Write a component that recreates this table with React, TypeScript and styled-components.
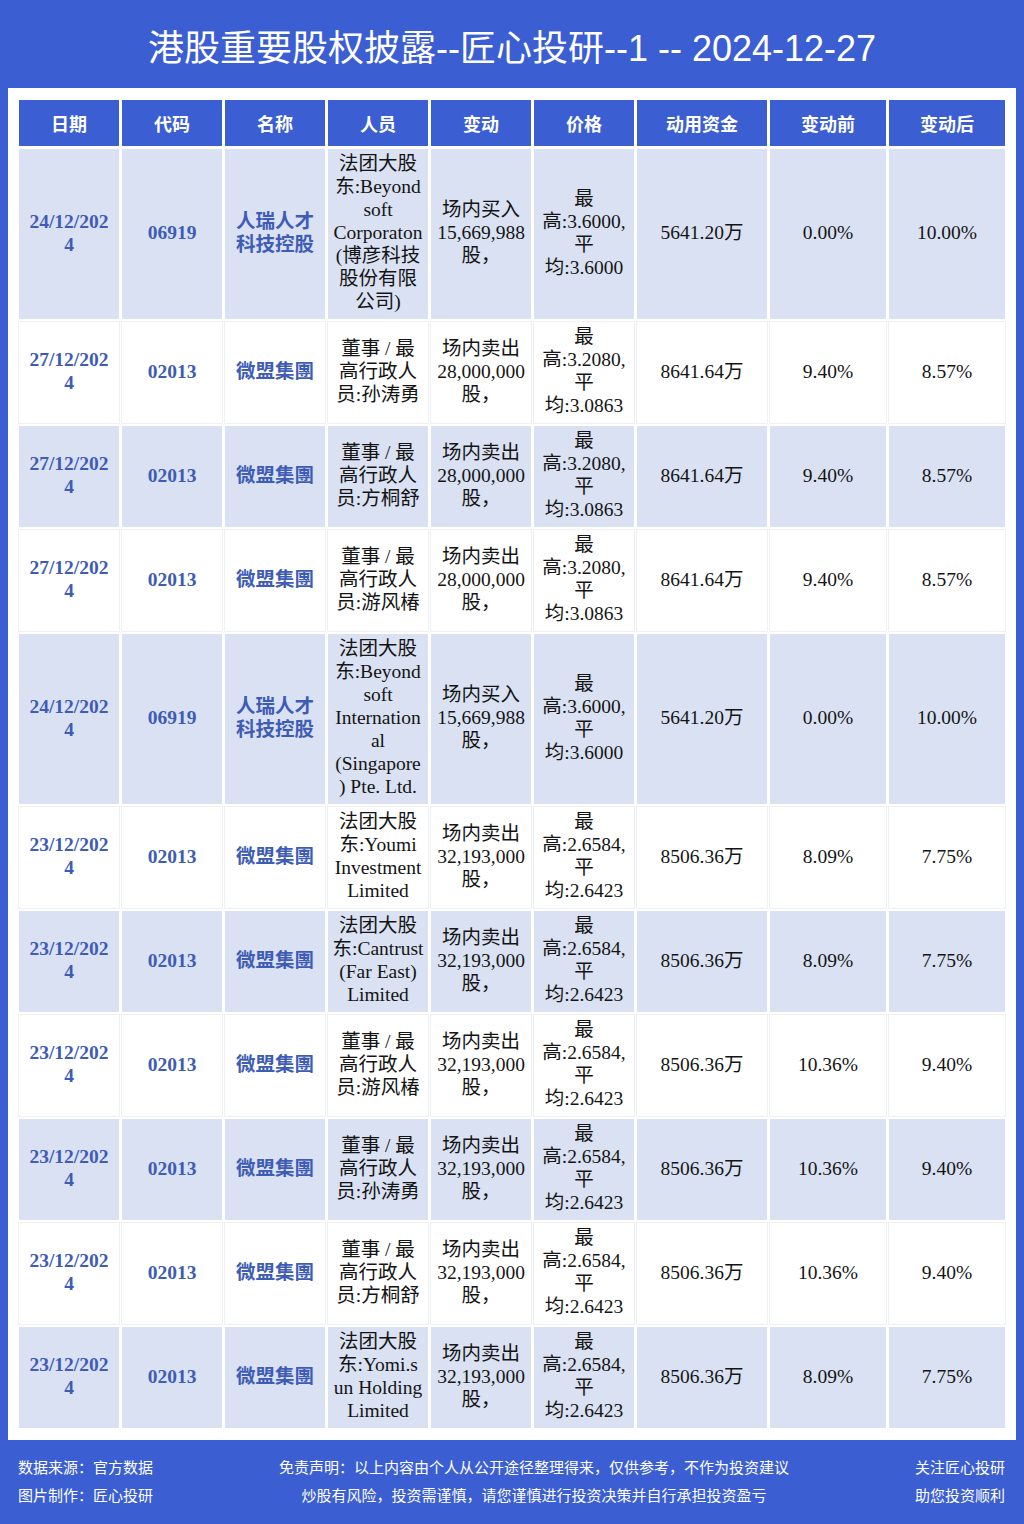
import React from "react";
import styled, { createGlobalStyle } from "styled-components";

const Global = createGlobalStyle`
  html, body { margin: 0; padding: 0; background: #3b5ed3; }
  #root { width: 1024px; min-height: 1524px; background: #3b5ed3; }
`;

const Page = styled.div`
  width: 1024px;
  display: flex;
  flex-direction: column;
  background: #3b5ed3;
`;

const Title = styled.h1`
  margin: 0;
  height: 88px;
  display: flex;
  align-items: center;
  justify-content: center;
  padding-top: 2px;
  box-sizing: border-box;
  color: #ffffff;
  font-family: "Liberation Sans", "Noto Sans CJK SC", sans-serif;
  font-weight: 400;
  font-size: 36px;
  letter-spacing: 0;
`;

const Panel = styled.div`
  margin: 0 8px;
  padding: 9px 8px;
  background: #ffffff;
`;

const Table = styled.table`
  width: 992px;
  table-layout: fixed;
  border-collapse: separate;
  border-spacing: 3px;
  background: #ffffff;
`;

const HeadCell = styled.th`
  height: 46px;
  padding: 0;
  background: #3b5ed3;
  color: #ffffff;
  font-family: "Noto Sans CJK SC", sans-serif;
  font-weight: 700;
  font-size: 18px;
  text-align: center;
  vertical-align: middle;
`;

const Row = styled.tr<{ $shaded: boolean }>`
  background: ${(p) => (p.$shaded ? "#d9e1f2" : "#ffffff")};
`;

const Cell = styled.td<{ $accent?: boolean; $white: boolean }>`
  padding: 3px 0 6px;
  text-align: center;
  vertical-align: middle;
  white-space: nowrap;
  line-height: 23px;
  font-family: "Liberation Serif", "Noto Sans CJK SC", serif;
  font-size: 19.5px;
  font-weight: ${(p) => (p.$accent ? 700 : 400)};
  color: ${(p) => (p.$accent ? "#3e5cb6" : "#141414")};
  box-shadow: ${(p) => (p.$white ? "0 0 0 1px #eef0f4" : "none")};
`;

const Footer = styled.div`
  display: flex;
  justify-content: space-between;
  align-items: flex-start;
  padding: 13px 19px 15px 18px;
  color: #ffffff;
  font-family: "Noto Sans CJK SC", sans-serif;
  font-size: 15px;
  line-height: 28px;
`;

const FootCol = styled.div<{ $align: "left" | "center" | "right" }>`
  display: flex;
  flex-direction: column;
  text-align: ${(p) => p.$align};
  white-space: nowrap;
`;

const widths = [100, 100, 100, 100, 100, 100, 130, 116, 116];
const headers = ["日期", "代码", "名称", "人员", "变动", "价格", "动用资金", "变动前", "变动后"];

type RowData = {
  date: string[];
  code: string;
  name: string[];
  person: string[];
  change: string[];
  price: string[];
  fund: string;
  before: string;
  after: string;
};

const buyPrice = ["最", "高:3.6000,", "平", "均:3.6000"];
const sell28 = ["场内卖出", "28,000,000", "股，"];
const price28 = ["最", "高:3.2080,", "平", "均:3.0863"];
const sell32 = ["场内卖出", "32,193,000", "股，"];
const price32 = ["最", "高:2.6584,", "平", "均:2.6423"];
const buy15 = ["场内买入", "15,669,988", "股，"];
const renrui = ["人瑞人才", "科技控股"];
const weimeng = ["微盟集團"];
const exec = (n: string) => ["董事 / 最", "高行政人", `员:${n}`];

const rows: RowData[] = [
  { date: ["24/12/202", "4"], code: "06919", name: renrui, person: ["法团大股", "东:Beyond", "soft", "Corporaton", "(博彦科技", "股份有限", "公司)"], change: buy15, price: buyPrice, fund: "5641.20万", before: "0.00%", after: "10.00%" },
  { date: ["27/12/202", "4"], code: "02013", name: weimeng, person: exec("孙涛勇"), change: sell28, price: price28, fund: "8641.64万", before: "9.40%", after: "8.57%" },
  { date: ["27/12/202", "4"], code: "02013", name: weimeng, person: exec("方桐舒"), change: sell28, price: price28, fund: "8641.64万", before: "9.40%", after: "8.57%" },
  { date: ["27/12/202", "4"], code: "02013", name: weimeng, person: exec("游风椿"), change: sell28, price: price28, fund: "8641.64万", before: "9.40%", after: "8.57%" },
  { date: ["24/12/202", "4"], code: "06919", name: renrui, person: ["法团大股", "东:Beyond", "soft", "Internation", "al", "(Singapore", ") Pte. Ltd."], change: buy15, price: buyPrice, fund: "5641.20万", before: "0.00%", after: "10.00%" },
  { date: ["23/12/202", "4"], code: "02013", name: weimeng, person: ["法团大股", "东:Youmi", "Investment", "Limited"], change: sell32, price: price32, fund: "8506.36万", before: "8.09%", after: "7.75%" },
  { date: ["23/12/202", "4"], code: "02013", name: weimeng, person: ["法团大股", "东:Cantrust", "(Far East)", "Limited"], change: sell32, price: price32, fund: "8506.36万", before: "8.09%", after: "7.75%" },
  { date: ["23/12/202", "4"], code: "02013", name: weimeng, person: exec("游风椿"), change: sell32, price: price32, fund: "8506.36万", before: "10.36%", after: "9.40%" },
  { date: ["23/12/202", "4"], code: "02013", name: weimeng, person: exec("孙涛勇"), change: sell32, price: price32, fund: "8506.36万", before: "10.36%", after: "9.40%" },
  { date: ["23/12/202", "4"], code: "02013", name: weimeng, person: exec("方桐舒"), change: sell32, price: price32, fund: "8506.36万", before: "10.36%", after: "9.40%" },
  { date: ["23/12/202", "4"], code: "02013", name: weimeng, person: ["法团大股", "东:Yomi.s", "un Holding", "Limited"], change: sell32, price: price32, fund: "8506.36万", before: "8.09%", after: "7.75%" },
];

const Lines = ({ lines }: { lines: string[] }) => (
  <>
    {lines.map((l, i) => (
      <React.Fragment key={i}>
        {i > 0 && <br />}
        {l}
      </React.Fragment>
    ))}
  </>
);

export default function App() {
  return (
    <Page>
      <Global />
      <Title>港股重要股权披露--匠心投研--1 -- 2024-12-27</Title>
      <Panel>
        <Table>
          <colgroup>
            {widths.map((w, i) => (
              <col key={i} style={{ width: w }} />
            ))}
          </colgroup>
          <thead>
            <tr>
              {headers.map((h) => (
                <HeadCell key={h}>{h}</HeadCell>
              ))}
            </tr>
          </thead>
          <tbody>
            {rows.map((r, i) => {
              const shaded = i % 2 === 0;
              const w = !shaded;
              return (
                <Row key={i} $shaded={shaded}>
                  <Cell $accent $white={w}><Lines lines={r.date} /></Cell>
                  <Cell $accent $white={w}>{r.code}</Cell>
                  <Cell $accent $white={w}><Lines lines={r.name} /></Cell>
                  <Cell $white={w}><Lines lines={r.person} /></Cell>
                  <Cell $white={w}><Lines lines={r.change} /></Cell>
                  <Cell $white={w}><Lines lines={r.price} /></Cell>
                  <Cell $white={w}>{r.fund}</Cell>
                  <Cell $white={w}>{r.before}</Cell>
                  <Cell $white={w}>{r.after}</Cell>
                </Row>
              );
            })}
          </tbody>
        </Table>
      </Panel>
      <Footer>
        <FootCol $align="left">
          <span>数据来源：官方数据</span>
          <span>图片制作：匠心投研</span>
        </FootCol>
        <FootCol $align="center">
          <span>免责声明：以上内容由个人从公开途径整理得来，仅供参考，不作为投资建议</span>
          <span>炒股有风险，投资需谨慎，请您谨慎进行投资决策并自行承担投资盈亏</span>
        </FootCol>
        <FootCol $align="right">
          <span>关注匠心投研</span>
          <span>助您投资顺利</span>
        </FootCol>
      </Footer>
    </Page>
  );
}
